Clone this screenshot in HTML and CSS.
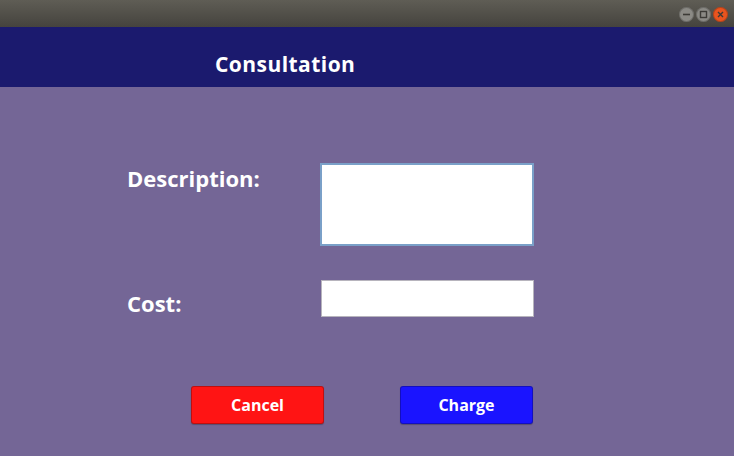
FILE: index.html
```html
<!DOCTYPE html>
<html>
<head>
<meta charset="utf-8">
<link rel="stylesheet" href="styles.css">
</head>
<body>
<div class="window">
  <div class="titlebar">
    <div class="controls">
      <span class="ctl min"><svg width="15" height="15" viewBox="0 0 15 15"><rect x="4" y="6.7" width="7" height="1.6" fill="#3c3b37"/></svg></span>
      <span class="ctl max"><svg width="15" height="15" viewBox="0 0 15 15"><rect x="4.5" y="4.5" width="6" height="6" fill="none" stroke="#3c3b37" stroke-width="1.4"/></svg></span>
      <span class="ctl close"><svg width="15" height="15" viewBox="0 0 15 15"><path d="M5 5 L10 10 M10 5 L5 10" stroke="#3c3b37" stroke-width="1.4"/></svg></span>
    </div>
  </div>
  <div class="header"><h1 class="title">Consultation</h1></div>
  <div class="content">
    <div class="form">
      <label class="label label-desc">Description:</label>
      <textarea class="field area"></textarea>
      <label class="label label-cost">Cost:</label>
      <input class="field input" type="text">
    </div>
    <div class="actions">
      <button class="btn cancel">Cancel</button>
      <button class="btn charge">Charge</button>
    </div>
  </div>
</div>
</body>
</html>
```
FILE: styles.css
```css
html, body { margin: 0; padding: 0; }
body {
  width: 734px; height: 456px; overflow: hidden;
  font-family: "Open Sans", "DejaVu Sans", sans-serif;
  background: #746696;
}
.window { display: flex; flex-direction: column; height: 456px; }
.titlebar {
  height: 27px;
  background: linear-gradient(#5f5d55, #45433e);
  display: flex; justify-content: flex-end; align-items: center;
  padding-right: 6px;
  box-sizing: border-box;
}
.controls { display: flex; gap: 2px; margin-top: 1px; }
.ctl {
  width: 15px; height: 15px; border-radius: 50%;
  display: flex; align-items: center; justify-content: center;
  box-shadow: inset 0 0 0 1px rgba(0,0,0,0.2);
}
.ctl.min, .ctl.max { background: #8b8a85; }
.ctl.close { background: #e9541f; }
.header {
  height: 60px; background: #1b1a6e;
  display: flex; align-items: flex-start;
  box-sizing: border-box; padding-top: 23px;
}
.title {
  margin: 0 0 0 215px; color: #fff;
  font-size: 21px; font-weight: 700; letter-spacing: 0.45px;
  line-height: 29px;
}
.content { flex: 1; display: flex; flex-direction: column; }
.form {
  display: grid;
  grid-template-columns: 193px 214px;
  grid-template-rows: 83px 37px;
  row-gap: 34px;
  margin: 76px 0 0 127px;
}
.label {
  color: #fff; font-weight: 700; font-size: 22px; line-height: 30px;
  align-self: start;
}
.label-desc { padding-top: 0; }
.label-cost { padding-top: 8px; }
.field {
  box-sizing: border-box; margin: 0; background: #fff;
  font: inherit; resize: none; outline: none;
}
.area { border: 2px solid #7aa0c8; width: 214px; height: 83px; }
.input { border: 1px solid #b7b4bd; width: 213px; height: 37px; margin-left: 1px; }
.actions {
  display: flex; gap: 76px;
  margin: 69px 0 0 191px;
}
.btn {
  width: 133px; height: 38px; border: 1px solid rgba(0,0,0,0.25);
  border-radius: 3px; color: #fff; font-family: inherit;
  font-weight: 700; font-size: 16px; padding: 0;
  box-shadow: 0 1px 1px rgba(0,0,0,0.25);
}
.cancel { background: #ff1414; }
.charge { background: #1a14ff; }
```
